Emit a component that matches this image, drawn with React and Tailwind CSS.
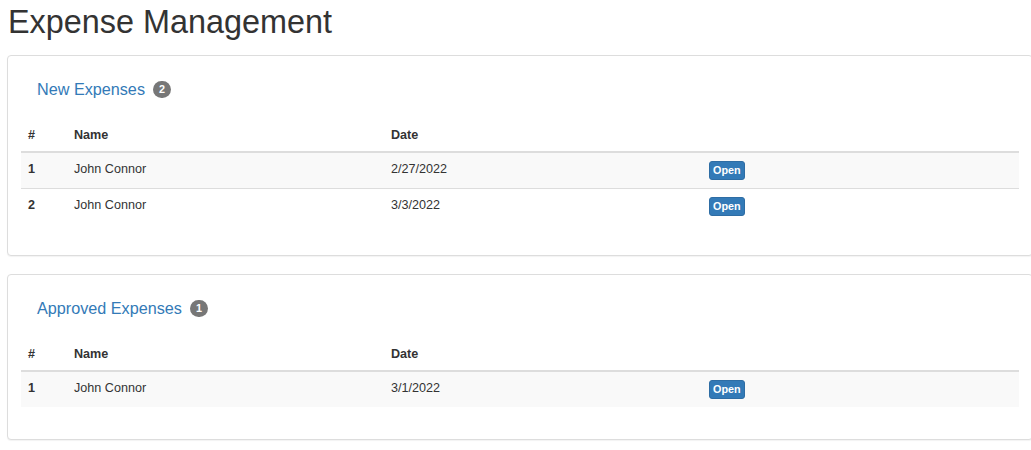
const newExpenses = [
  { id: 1, name: "John Connor", date: "2/27/2022" },
  { id: 2, name: "John Connor", date: "3/3/2022" },
];

const approvedExpenses = [{ id: 1, name: "John Connor", date: "3/1/2022" }];

function ExpenseTable({ rows }) {
  return (
    <div className="text-[12.6px] leading-[18px] text-[#333]">
      {/* header */}
      <div className="grid grid-cols-[46px_317px_318px_1fr] border-b-2 border-[#ddd] font-bold">
        <div className="px-[7px] py-[7px]">#</div>
        <div className="px-[7px] py-[7px]">Name</div>
        <div className="px-[7px] py-[7px]">Date</div>
        <div className="px-[7px] py-[7px]"></div>
      </div>
      {rows.map((r, i) => (
        <div
          key={r.id}
          className={
            "grid grid-cols-[46px_317px_318px_1fr] h-[35px] " +
            (i % 2 === 0 ? "bg-[#f9f9f9]" : "bg-white") +
            (i > 0 ? " border-t border-[#ddd]" : "")
          }
        >
          <div className="px-[7px] pt-[7px] font-bold">{r.id}</div>
          <div className="px-[7px] pt-[7px]">{r.name}</div>
          <div className="px-[7px] pt-[7px]">{r.date}</div>
          <div className="px-[7px] pt-[8px]">
            <button className="bg-[#337ab7] border border-[#2e6da4] text-white font-bold text-[10.8px] leading-[16px] px-[3px] pb-[1px] rounded-[3px]">
              Open
            </button>
          </div>
        </div>
      ))}
    </div>
  );
}

function Panel({ title, count, rows, bottom }) {
  return (
    <div className="w-[1026px] border border-[#ddd] rounded-[4px] bg-white shadow-[0_1px_1px_rgba(0,0,0,0.05)] px-[13px]">
      <div className="flex items-center gap-[8px] pl-[16px] pt-[23px] pb-[20px]">
        <span className="text-[16.2px] leading-[20px] text-[#337ab7]">{title}</span>
        <span className="bg-[#777] text-white text-[10.8px] font-bold leading-[11px] rounded-full px-[6px] py-[3px]">
          {count}
        </span>
      </div>
      <ExpenseTable rows={rows} />
      <div className={bottom}></div>
    </div>
  );
}

export default function App() {
  return (
    <div
      className="w-[1031px] h-[450px] overflow-hidden bg-white pl-[7px]"
      style={{ fontFamily: '"Liberation Sans", Arial, sans-serif' }}
    >
      <h1 className="text-[32.4px] leading-[36px] text-[#333] pl-[1px] pt-[4px] mb-[15px]">
        Expense Management
      </h1>

      <Panel title="New Expenses" count={2} rows={newExpenses} bottom="h-[32px]" />

      <div className="h-[18px]"></div>

      <Panel title="Approved Expenses" count={1} rows={approvedExpenses} bottom="h-[32px]" />
    </div>
  );
}
